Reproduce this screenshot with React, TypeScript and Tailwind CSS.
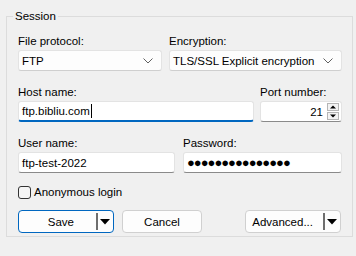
const font = { fontFamily: '"Segoe UI", "Liberation Sans", Arial, sans-serif' };

function Chevron() {
  return (
    <svg width="10" height="6" viewBox="0 0 10 6" className="text-[#606060]">
      <path d="M0.5 0.5 L5 5 L9.5 0.5" fill="none" stroke="currentColor" strokeWidth="1" />
    </svg>
  );
}

function Combo({ value, className }: { value: string; className: string }) {
  return (
    <div
      className={`flex h-[21px] items-center justify-between rounded-[3px] border border-[#e3e3e3] border-b-[#cfcfcf] bg-[#fdfdfd] pl-[3px] pr-[8px] ${className}`}
    >
      <span className="text-black">{value}</span>
      <Chevron />
    </div>
  );
}

function SplitArrow() {
  return (
    <div className="flex items-center">
      <div className="h-[17px] w-[2px] bg-[#6e6e6e]" />
      <svg width="11" height="6" viewBox="0 0 11 6" className="ml-[2px]">
        <path d="M0 0 H10 L5 5.5 Z" fill="#000" />
      </svg>
    </div>
  );
}

export default function App() {
  return (
    <div className="h-[256px] w-[356px] overflow-hidden bg-[#f0f0f0] text-[11.5px] leading-[16px] text-black" style={font}>
      <div className="pl-[6px] pt-[16px]">
        <div className="relative h-[221px] w-[347px] border border-[#dcdcdc] px-[11px] pt-[16px]">
          <span className="absolute -top-[9px] left-[6px] bg-[#f0f0f0] px-[2px]">Session</span>

          <div className="flex gap-[7px]">
            <div className="flex flex-col">
              <span className="h-[16px]">File protocol:</span>
              <Combo value="FTP" className="mt-[1px] w-[144px]" />
            </div>
            <div className="flex flex-col">
              <span className="h-[16px]">Encryption:</span>
              <Combo value="TLS/SSL Explicit encryption" className="mt-[1px] w-[173px]" />
            </div>
          </div>

          <div className="mt-[13px] flex gap-[6px]">
            <div className="flex flex-col">
              <span className="h-[16px]">Host name:</span>
              <div className="mt-[1px] flex h-[21px] w-[236px] items-center rounded-[3px] border border-[#e3e3e3] border-b-2 border-b-[#0067c0] bg-white pl-[3px]">
                <span>ftp.bibliu.com</span>
                <span className="ml-[1px] h-[14px] w-[1px] bg-black" />
              </div>
            </div>
            <div className="flex flex-col">
              <span className="h-[16px]">Port number:</span>
              <div className="mt-[1px] flex h-[21px] w-[82px] items-center justify-end rounded-[3px] border border-[#e3e3e3] border-b-[#8a8a8a] bg-white pr-[2px]">
                <span className="mr-[4px]">21</span>
                <div className="flex flex-col gap-[1px]">
                  <div className="flex h-[8px] w-[12px] items-center justify-center border border-[#b5b5b5] bg-[#f3f3f3]">
                    <svg width="6" height="4" viewBox="0 0 6 4"><path d="M0 3.5 H6 L3 0.5 Z" fill="#000" /></svg>
                  </div>
                  <div className="flex h-[8px] w-[12px] items-center justify-center border border-[#b5b5b5] bg-[#f3f3f3]">
                    <svg width="6" height="4" viewBox="0 0 6 4"><path d="M0 0.5 H6 L3 3.5 Z" fill="#000" /></svg>
                  </div>
                </div>
              </div>
            </div>
          </div>

          <div className="mt-[13px] flex gap-[8px]">
            <div className="flex flex-col">
              <span className="h-[16px]">User name:</span>
              <div className="mt-[1px] flex h-[21px] w-[157px] items-center rounded-[3px] border border-[#e3e3e3] border-b-[#8a8a8a] bg-white pl-[3px]">
                ftp-test-2022
              </div>
            </div>
            <div className="flex flex-col">
              <span className="h-[16px]">Password:</span>
              <div className="mt-[1px] flex h-[21px] w-[159px] items-center rounded-[3px] border border-[#e3e3e3] border-b-[#8a8a8a] bg-white pl-[3px] text-[13px] tracking-[-1px]">
                ●●●●●●●●●●●●●●●
              </div>
            </div>
          </div>

          <div className="mt-[11px] flex items-center gap-[3px]">
            <div className="h-[13px] w-[13px] rounded-[3px] border border-[#333] bg-[#f5f5f5]" />
            <span>Anonymous login</span>
          </div>

          <div className="mt-[10px] flex items-center">
            <div className="flex h-[23px] w-[96px] items-center justify-end rounded-[4px] border border-[#0067c0] bg-[#fdfdfd] pr-[2px]">
              <span className="mr-[22px]">Save</span>
              <SplitArrow />
            </div>
            <div className="ml-[8px] flex h-[23px] w-[80px] items-center justify-center rounded-[4px] border border-[#d0d0d0] bg-[#fdfdfd]">
              Cancel
            </div>
            <div className="ml-auto flex h-[23px] w-[96px] items-center justify-end rounded-[4px] border border-[#d0d0d0] bg-[#fdfdfd] pr-[2px]">
              <span className="mr-[10px]">Advanced...</span>
              <SplitArrow />
            </div>
          </div>
        </div>
      </div>
    </div>
  );
}
